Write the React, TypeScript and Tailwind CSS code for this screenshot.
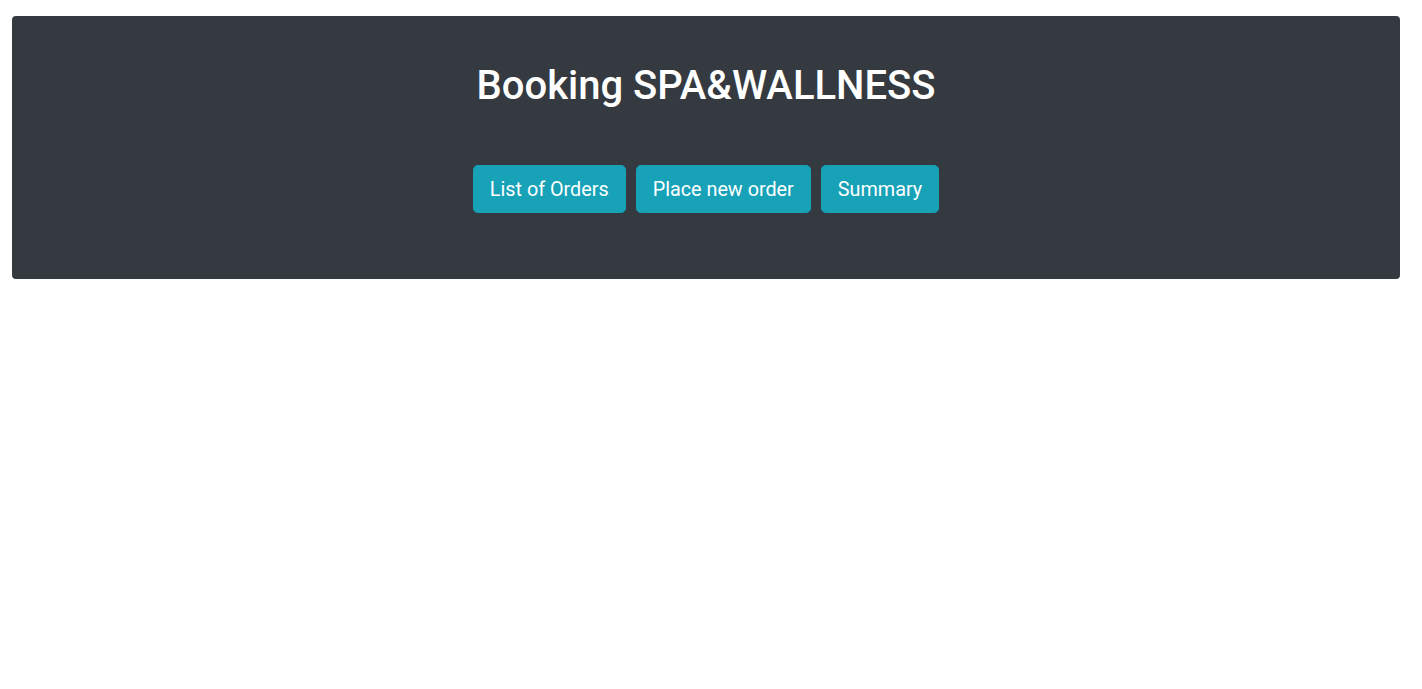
export default function App() {
  const btn =
    "bg-[#17a2b8] text-white text-[19.8px] leading-[30px] px-4 pt-[9px] pb-[7px] border border-[#17a2b8] rounded-[4.8px]";
  return (
    <div className="min-h-screen bg-white pl-[12px] pr-[22px] pt-[16px]" style={{ fontFamily: "Roboto, 'Liberation Sans', sans-serif" }}>
      <div className="bg-[#343a40] rounded-[4px] pt-[46px] pb-[66px] flex flex-col items-center">
        <h1 className="text-white text-[40px] leading-[48px] font-medium">Booking SPA&amp;WALLNESS</h1>
        <div className="flex gap-[10px] mt-[55px]">
          <button className={btn}>List of Orders</button>
          <button className={btn}>Place new order</button>
          <button className={btn}>Summary</button>
        </div>
      </div>
    </div>
  );
}
